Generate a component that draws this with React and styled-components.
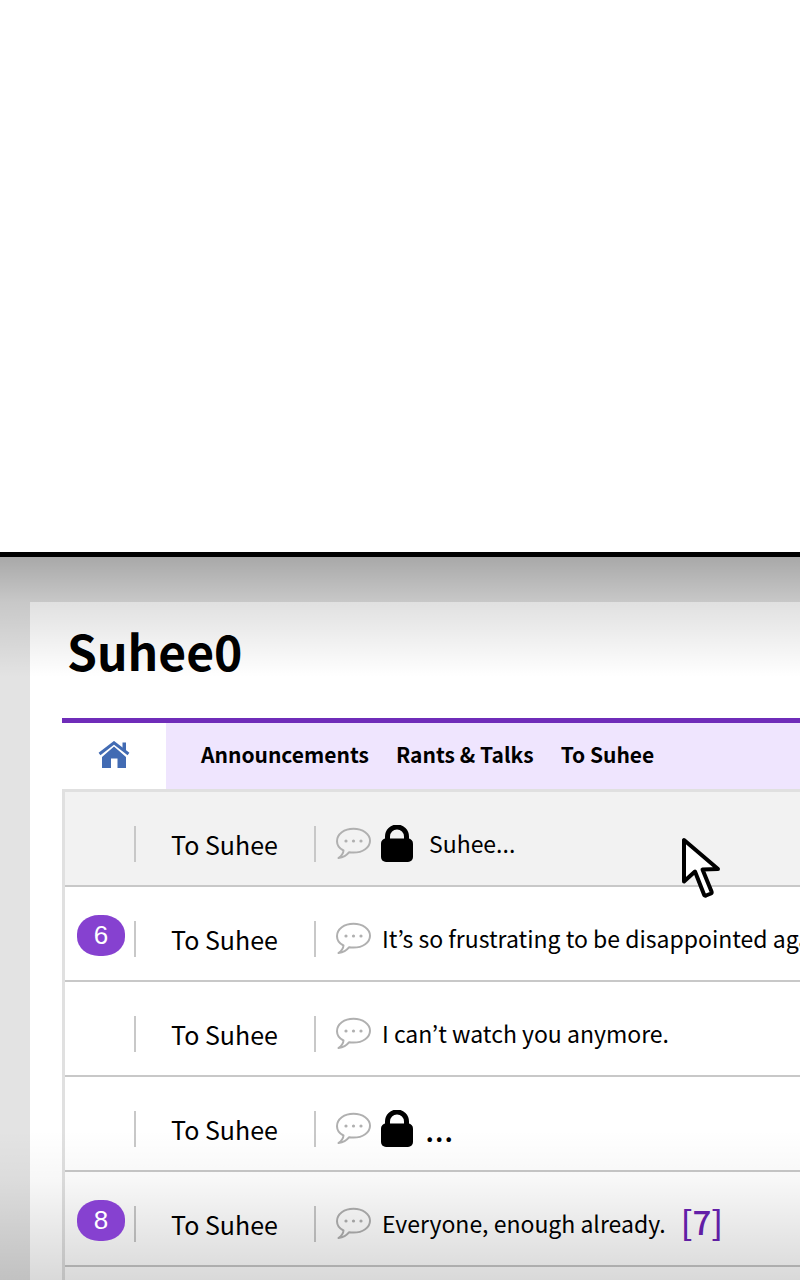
import React from 'react';
import styled, { createGlobalStyle } from 'styled-components';

const GlobalStyle = createGlobalStyle`
  * {
    box-sizing: border-box;
  }

  body {
    margin: 0;
    background: #ffffff;
    color: #000000;
    font-family: "Noto Sans CJK KR", "Noto Sans", sans-serif;
  }

  a {
    color: inherit;
    text-decoration: none;
  }

  svg {
    flex-shrink: 0;
  }
`;

const Page = styled.div`
  display: flex;
  flex-direction: column;
  height: 100vh;
  padding-top: 552px;
`;

const Screen = styled.main`
  position: relative;
  flex: 1;
  min-height: 0;
  padding: 45px 0 0 30px;
  overflow: hidden;
  background: #e3e3e3;
  border-top: 5px solid #000000;
`;

const Shade = styled.div`
  position: absolute;
  inset: 0;
  pointer-events: none;
  background:
    linear-gradient(to bottom, rgba(0, 0, 0, 0.26), rgba(0, 0, 0, 0.12) 45px, rgba(0, 0, 0, 0) 120px),
    linear-gradient(to top, rgba(0, 0, 0, 0.15), rgba(0, 0, 0, 0.03) 100px, rgba(0, 0, 0, 0) 150px);
`;

const Board = styled.div`
  padding: 0 0 0 32px;
  background: #ffffff;
`;

const Title = styled.h1`
  margin: 0;
  padding: 10px 0 30px 5px;
  font-size: 48px;
  line-height: 76px;
  font-weight: 700;
`;

const Nav = styled.nav`
  display: flex;
  height: 71px;
  border-top: 5px solid #6f2cb9;
  background: #efe5fe;
`;

const HomeLink = styled.a`
  display: flex;
  align-items: center;
  justify-content: center;
  width: 104px;
  padding-bottom: 3px;
  background: #ffffff;
`;

const NavLinks = styled.div`
  display: flex;
  align-items: center;
  gap: 27px;
  padding: 0 0 5px 35px;
  font-size: 21px;
  line-height: 32px;
  font-weight: 700;
  white-space: nowrap;
`;

const Posts = styled.table`
  width: 100%;
  table-layout: fixed;
  border-spacing: 0;
  border-top: 3px solid #e0e0e0;
  border-left: 3px solid #e0e0e0;
`;

const Post = styled.tr`
  background: ${props => props.$active ? '#f2f2f2' : '#ffffff'};
`;

const Cell = styled.td`
  width: ${props => props.$width || 'auto'};
  height: 95px;
  padding: 11px 0 0;
  border-bottom: 2px solid #c8c8c8;
  overflow: hidden;
`;

const Slot = styled.div`
  display: flex;
  align-items: center;
  justify-content: space-between;
  padding-left: ${props => props.$indent};
`;

const Divider = styled.span`
  width: 2px;
  height: 36px;
  margin-left: auto;
  background: #c8c8c8;
`;

const Badge = styled.span`
  position: relative;
  z-index: 1;
  width: 48px;
  height: 41px;
  margin-bottom: 8px;
  border-radius: 22px / 19px;
  background: #8641d0;
  color: #ffffff;
  font-family: "Liberation Sans", Arial, sans-serif;
  font-size: 26px;
  line-height: 41px;
  text-align: center;
`;

const Category = styled.a`
  font-size: 25px;
  line-height: 38px;
`;

const Subject = styled.a`
  display: flex;
  align-items: center;
  padding: 0 0 2px 20px;
  font-size: 23px;
  line-height: 36px;
  white-space: nowrap;
`;

const Text = styled.span`
  margin-left: ${props => props.$locked ? '16px' : '11px'};
`;

const Dots = styled.span`
  margin-left: 12px;
  font-size: 34px;
`;

const Replies = styled.span`
  margin-left: 15px;
  padding-bottom: 4px;
  color: #6a22b4;
  font-size: 33px;
  font-weight: 500;
`;

const LockIcon = styled.svg`
  margin-left: 10px;
`;

const Pointer = styled.svg`
  position: absolute;
  top: 279px;
  left: 680px;
  pointer-events: none;
`;

const posts = [
  { id: 1, text: 'Suhee...', locked: true, active: true },
  { id: 2, count: 6, text: 'It’s so frustrating to be disappointed again.' },
  { id: 3, text: 'I can’t watch you anymore.' },
  { id: 4, dots: '...', locked: true },
  { id: 5, count: 8, text: 'Everyone, enough already.', replies: 7 },
];

function Home() {
  return (
    <svg width="32" height="28" viewBox="0 0 32 28" fill="#426bb3">
      <path d="M4 16 16 5.500 28 16V27H19.500V17.500H13V27H4Z" />
      <path d="M1.500 13.500 16 1.500 30.500 13.500" fill="none" stroke="#ffffff" strokeWidth="5" />
      <path d="M24.500 1.500H28V11L24.500 8Z" />
      <path d="M1.500 13 16 1.800 30.500 13" fill="none" stroke="#426bb3" strokeWidth="3" />
    </svg>
  );
}

function Bubble() {
  return (
    <svg width="35" height="32" viewBox="0 0 35 32" fill="none">
      <path
        d="M7.500 23.500C3.500 21.500 1 18.200 1 14.200 1 7 8.300 1.800 17.500 1.800S34 7 34 13.800 26.700 25.600 17.500 25.600C16 25.600 14.500 25.500 13.200 25.200 10.500 28.600 7 30.400 2.500 31 5.500 28.800 7.300 26.700 7.500 23.500Z"
        stroke="#b0b0b0"
        strokeWidth="2"
        strokeLinejoin="round"
      />
      <g fill="#b0b0b0">
        <circle cx="10" cy="14" r="1.600" />
        <circle cx="17.500" cy="14" r="1.600" />
        <circle cx="25" cy="14" r="1.600" />
      </g>
    </svg>
  );
}

function Lock() {
  return (
    <LockIcon width="32" height="37" viewBox="0 0 32 37">
      <path d="M6.500 17V11.500a9.500 9.500 0 0 1 19 0V17" fill="none" stroke="#000000" strokeWidth="5" />
      <rect y="13.500" width="32" height="23.500" rx="5" />
    </LockIcon>
  );
}

function renderPost(post) {
  return (
    <Post key={post.id} $active={post.active}>
      <Cell $width="71px">
        <Slot $indent="12px">
          {post.count && <Badge>{post.count}</Badge>}
          <Divider />
        </Slot>
      </Cell>
      <Cell $width="180px">
        <Slot $indent="35px">
          <Category href="#to-suhee">To Suhee</Category>
          <Divider />
        </Slot>
      </Cell>
      <Cell>
        <Subject href={`#post-${post.id}`}>
          <Bubble />
          {post.locked && <Lock />}
          {post.text && <Text $locked={post.locked}>{post.text}</Text>}
          {post.dots && <Dots>{post.dots}</Dots>}
          {post.replies && <Replies>[{post.replies}]</Replies>}
        </Subject>
      </Cell>
    </Post>
  );
}

export default () => (
  <Page>
    <GlobalStyle />
    <Screen>
      <Board>
        <Title>Suhee0</Title>
        <Nav>
          <HomeLink href="#home" aria-label="Home"><Home /></HomeLink>
          <NavLinks>
            <a href="#announcements">Announcements</a>
            <a href="#rants">Rants &amp; Talks</a>
            <a href="#to-suhee">To Suhee</a>
          </NavLinks>
        </Nav>
        <Posts>
          <tbody>
            {posts.map(renderPost)}
            <Post>
              <Cell colSpan="3" />
            </Post>
          </tbody>
        </Posts>
      </Board>
      <Shade />
      <Pointer width="42" height="66" viewBox="0 0 42 66">
        <path
          d="M4 4V45.500L15 35.500 24 58.500Q24.500 60 26 59.500L31 57.500Q32 57 31.500 55.500L22.500 33.500 38 33Z"
          fill="#ffffff"
          stroke="#000000"
          strokeWidth="4"
          strokeLinejoin="round"
        />
      </Pointer>
    </Screen>
  </Page>
);
